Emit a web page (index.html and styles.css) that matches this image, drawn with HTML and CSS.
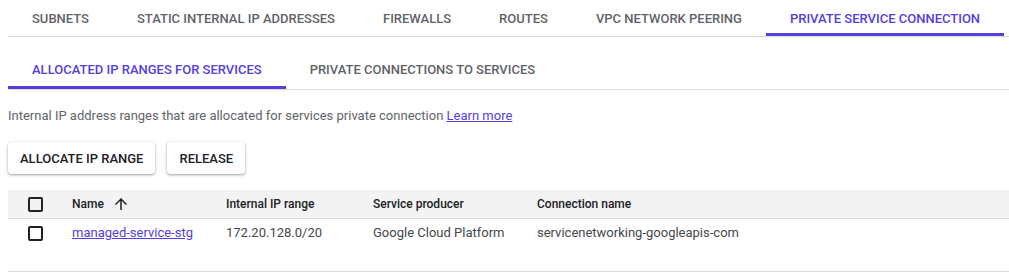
FILE: index.html
```html
<!DOCTYPE html>
<html lang="en">
<head>
    <meta charset="UTF-8">
    <title>VPC network details</title>
    <link rel="stylesheet" href="styles.css">
</head>
<body>
    <div class="page">
        <nav class="tabs">
            <a href="#" class="tab">Subnets</a>
            <a href="#" class="tab">Static internal IP addresses</a>
            <a href="#" class="tab">Firewalls</a>
            <a href="#" class="tab">Routes</a>
            <a href="#" class="tab">VPC network peering</a>
            <a href="#" class="tab active">Private service connection</a>
        </nav>

        <nav class="tabs sub-tabs">
            <a href="#" class="tab active">Allocated IP ranges for services</a>
            <a href="#" class="tab">Private connections to services</a>
        </nav>

        <p class="description">
            Internal IP address ranges that are allocated for services private connection
            <a href="#" class="link">Learn more</a>
        </p>

        <div class="actions">
            <button class="btn">Allocate IP range</button>
            <button class="btn">Release</button>
        </div>

        <table class="ranges">
            <colgroup>
                <col class="col-check">
                <col class="col-name">
                <col class="col-range">
                <col class="col-producer">
                <col>
            </colgroup>
            <thead>
                <tr>
                    <th><span class="checkbox"></span></th>
                    <th>
                        <span class="sortable">Name
                            <svg class="sort-icon" viewBox="0 0 24 24" width="18" height="18">
                                <path d="M4 12l1.41 1.41L11 7.83V20h2V7.83l5.58 5.59L20 12l-8-8-8 8z"/>
                            </svg>
                        </span>
                    </th>
                    <th>Internal IP range</th>
                    <th>Service producer</th>
                    <th>Connection name</th>
                </tr>
            </thead>
            <tbody>
                <tr>
                    <td><span class="checkbox"></span></td>
                    <td><a href="#" class="link">managed-service-stg</a></td>
                    <td>172.20.128.0/20</td>
                    <td>Google Cloud Platform</td>
                    <td>servicenetworking-googleapis-com</td>
                </tr>
            </tbody>
        </table>
    </div>
</body>
</html>
```

FILE: styles.css
```css
body {
    margin: 0;
    font-family: Roboto, "Noto Sans", sans-serif;
    color: #202124;
    background: #fff;
}

.page {
    margin-left: 8px;
}

.tabs {
    display: flex;
    height: 36px;
    border-bottom: 1px solid #dadce0;
}

.tab {
    display: flex;
    align-items: center;
    padding: 0 24px;
    font-size: 13px;
    font-weight: 500;
    text-transform: uppercase;
    text-decoration: none;
    color: #5f6368;
    white-space: nowrap;
}

.tab.active {
    color: #5440de;
    box-shadow: inset 0 -3px 0 #5440de;
}

.sub-tabs {
    margin-top: 12px;
    height: 40px;
}

.description {
    margin: 16px 0 0;
    font-size: 13px;
    line-height: 20px;
    color: #5f6368;
}

.link {
    color: #5440de;
    text-decoration: underline;
}

.actions {
    display: flex;
    gap: 12px;
    margin-top: 16px;
}

.btn {
    height: 32px;
    padding: 0 12px;
    border: none;
    border-radius: 4px;
    background: #fff;
    font-family: inherit;
    font-size: 13px;
    font-weight: 500;
    text-transform: uppercase;
    color: #202124;
    box-shadow: 0 1px 2px rgba(60, 64, 67, 0.3), 0 1px 3px 1px rgba(60, 64, 67, 0.15);
    cursor: pointer;
}

.ranges {
    width: 100%;
    margin-top: 16px;
    border-collapse: collapse;
    table-layout: fixed;
    font-size: 13px;
}

.col-check { width: 64px; }
.col-name { width: 154px; }
.col-range { width: 147px; }
.col-producer { width: 164px; }

.ranges th {
    height: 28px;
    padding: 0;
    background: #f3f3f3;
    border-bottom: 1px solid #dadce0;
    font-size: 12px;
    font-weight: 500;
    text-align: left;
    color: #202124;
    vertical-align: middle;
}

.ranges td {
    padding: 4px 0 28px;
    line-height: 20px;
    vertical-align: top;
    border-bottom: 1px solid #dadce0;
    color: #45484c;
    white-space: nowrap;
}

.ranges th:first-child,
.ranges td:first-child {
    padding-left: 20px;
}

.checkbox {
    display: inline-block;
    box-sizing: border-box;
    width: 15px;
    height: 15px;
    border: 2px solid #202124;
    border-radius: 2px;
    vertical-align: middle;
}

.sortable {
    display: inline-flex;
    align-items: center;
    gap: 8px;
}

.sort-icon {
    fill: #202124;
}
```
